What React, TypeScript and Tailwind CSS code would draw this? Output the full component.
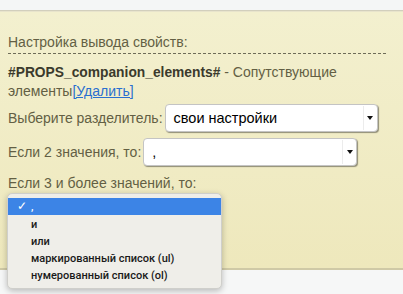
import React from "react";

function Select({ value, width }: { value: string; width: string }) {
  return (
    <div
      className={`relative h-[28px] ${width} rounded-[4px] border border-[#c4c4c4] bg-white shadow-[1px_1px_1px_rgba(0,0,0,0.4)] flex items-center`}
    >
      <span className="pl-[8px] text-[14.5px] text-black leading-none">{value}</span>
      <div className="absolute right-0 top-[1px] bottom-[1px] w-[14px] border-l border-[#ececec] flex items-center justify-center">
        <svg width="6" height="4" viewBox="0 0 6 4">
          <path d="M0 0 L6 0 L3 4 Z" fill="#111" />
        </svg>
      </div>
    </div>
  );
}

export default function App() {
  return (
    <div
      className="w-[403px] h-[294px] bg-[#f6f7f7] overflow-hidden relative"
      style={{ fontFamily: '"Liberation Sans", Arial, sans-serif' }}
    >
      <div className="h-[10px] bg-[#f4f6f6]" />
      <div className="h-[2px] bg-[#d2cfbd] border-b border-[#e8e4cc]" />
      <div className="h-[258px] bg-gradient-to-b from-[#f3f0cf] to-[#eee8bc] border-b-2 border-[#cfc9a6] px-[8px] pt-[22px] text-[#635f44] text-[14px]">
        <div className="leading-[16px]">Настройка вывода свойств:</div>
        <div className="mt-[3px] w-[378px] border-t border-dashed border-[#6e6c58]" />
        <div className="mt-[9px] leading-[19px]">
          <b className="text-[#3b3a2c] text-[13.8px]">#PROPS_companion_elements#</b> - Сопутствующие
          <br />
          элементы
          <a className="text-[#2a6fd0] underline">[Удалить]</a>
        </div>
        <div className="mt-[3px] flex items-center gap-[2px]">
          <span>Выберите разделитель:</span>
          <Select value="свои настройки" width="w-[213px]" />
        </div>
        <div className="mt-[6px] flex items-center gap-[2px]">
          <span>Если 2 значения, то:</span>
          <Select value="," width="w-[214px]" />
        </div>
        <div className="mt-[9px] leading-[16px]">Если 3 и более значений, то:</div>
      </div>
      <div
        className="absolute left-[7px] top-[193px] w-[215px] h-[96px] rounded-[5px] bg-[#efeee9] border border-[#cfcfcb] shadow-[0_2px_6px_rgba(0,0,0,0.25)] pt-[4px] text-[11px] font-medium text-[#1a1a1a] leading-[17px]"
        style={{ fontFamily: 'Roboto, "Liberation Sans", sans-serif' }}
      >
        <div className="h-[17px] bg-[#3c84e6] flex items-center text-white">
          <span className="w-[23px] pl-[9px] text-[12px]">✓</span>
          <span>,</span>
        </div>
        <div className="pl-[23px] mt-[1px]">и</div>
        <div className="pl-[23px]">или</div>
        <div className="pl-[23px]">маркированный список (ul)</div>
        <div className="pl-[23px]">нумерованный список (ol)</div>
      </div>
    </div>
  );
}
